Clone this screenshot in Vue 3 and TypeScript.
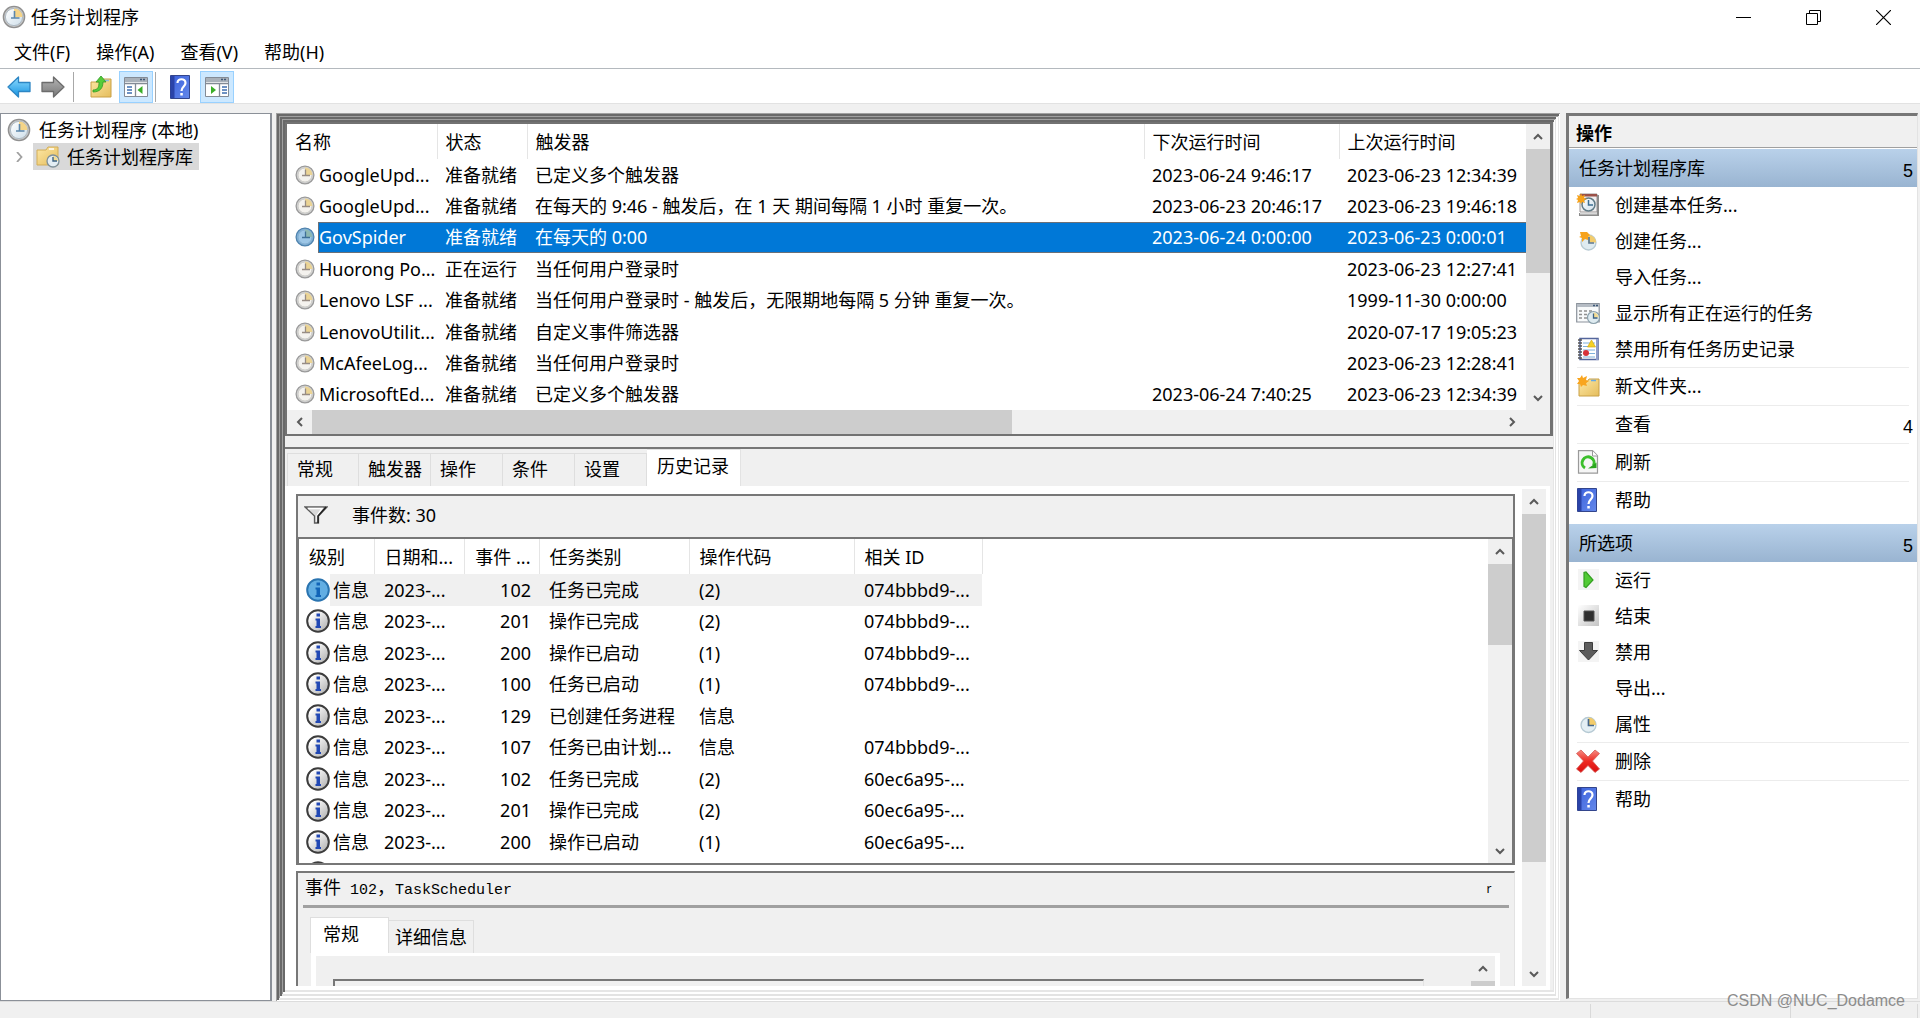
<script setup lang="ts">
import { ref } from 'vue'

interface Task { name: string; state: string; trigger: string; next: string; last: string }
interface EventRow { date: string; id: string; category: string; op: string; rel: string }
interface Action { label: string; icon?: string; divider?: boolean; mark?: string }

const menus = ['文件(F)', '操作(A)', '查看(V)', '帮助(H)']

const tasks: Task[] = [
  { name: 'GoogleUpd...', state: '准备就绪', trigger: '已定义多个触发器', next: '2023-06-24 9:46:17', last: '2023-06-23 12:34:39' },
  { name: 'GoogleUpd...', state: '准备就绪', trigger: '在每天的 9:46 - 触发后，在 1 天 期间每隔 1 小时 重复一次。', next: '2023-06-23 20:46:17', last: '2023-06-23 19:46:18' },
  { name: 'GovSpider', state: '准备就绪', trigger: '在每天的 0:00', next: '2023-06-24 0:00:00', last: '2023-06-23 0:00:01' },
  { name: 'Huorong Po...', state: '正在运行', trigger: '当任何用户登录时', next: '', last: '2023-06-23 12:27:41' },
  { name: 'Lenovo LSF ...', state: '准备就绪', trigger: '当任何用户登录时 - 触发后，无限期地每隔 5 分钟 重复一次。', next: '', last: '1999-11-30 0:00:00' },
  { name: 'LenovoUtilit...', state: '准备就绪', trigger: '自定义事件筛选器', next: '', last: '2020-07-17 19:05:23' },
  { name: 'McAfeeLog...', state: '准备就绪', trigger: '当任何用户登录时', next: '', last: '2023-06-23 12:28:41' },
  { name: 'MicrosoftEd...', state: '准备就绪', trigger: '已定义多个触发器', next: '2023-06-24 7:40:25', last: '2023-06-23 12:34:39' },
]
const selectedTask = ref(2)

const tabs = ['常规', '触发器', '操作', '条件', '设置', '历史记录']
const activeTab = ref(5)

const events: EventRow[] = [
  { date: '2023-...', id: '102', category: '任务已完成', op: '(2)', rel: '074bbbd9-...' },
  { date: '2023-...', id: '201', category: '操作已完成', op: '(2)', rel: '074bbbd9-...' },
  { date: '2023-...', id: '200', category: '操作已启动', op: '(1)', rel: '074bbbd9-...' },
  { date: '2023-...', id: '100', category: '任务已启动', op: '(1)', rel: '074bbbd9-...' },
  { date: '2023-...', id: '129', category: '已创建任务进程', op: '信息', rel: '' },
  { date: '2023-...', id: '107', category: '任务已由计划...', op: '信息', rel: '074bbbd9-...' },
  { date: '2023-...', id: '102', category: '任务已完成', op: '(2)', rel: '60ec6a95-...' },
  { date: '2023-...', id: '201', category: '操作已完成', op: '(2)', rel: '60ec6a95-...' },
  { date: '2023-...', id: '200', category: '操作已启动', op: '(1)', rel: '60ec6a95-...' },
  { date: '', id: '', category: '', op: '', rel: '' },
]
const selectedEvent = ref(0)

const groups: { title: string; items: Action[] }[] = [
  {
    title: '任务计划程序库',
    items: [
      { label: '创建基本任务...', icon: 'basic' },
      { label: '创建任务...', icon: 'newtask' },
      { label: '导入任务...' },
      { label: '显示所有正在运行的任务', icon: 'running' },
      { label: '禁用所有任务历史记录', icon: 'journal' },
      { label: '新文件夹...', icon: 'newfolder', divider: true },
      { label: '查看', divider: true, mark: '4' },
      { label: '刷新', icon: 'refresh', divider: true },
      { label: '帮助', icon: 'help', divider: true },
    ],
  },
  {
    title: '所选项',
    items: [
      { label: '运行', icon: 'run' },
      { label: '结束', icon: 'stop' },
      { label: '禁用', icon: 'disable' },
      { label: '导出...' },
      { label: '属性', icon: 'props' },
      { label: '删除', icon: 'delete', divider: true },
      { label: '帮助', icon: 'help', divider: true },
    ],
  },
]
</script>

<template>
  <div class="window">
    <svg class="defs" width="0" height="0" aria-hidden="true">
      <defs>
        <linearGradient id="gBlue" x1="0" y1="0" x2="0" y2="1"><stop offset="0" stop-color="#8fdcff" /><stop offset="1" stop-color="#1592e0" /></linearGradient>
        <linearGradient id="gGray" x1="0" y1="0" x2="0" y2="1"><stop offset="0" stop-color="#b4b4b4" /><stop offset="1" stop-color="#787878" /></linearGradient>
        <linearGradient id="gFolder" x1="0" y1="0" x2="1" y2="1"><stop offset="0" stop-color="#fde8a6" /><stop offset="1" stop-color="#e5bd5c" /></linearGradient>
        <linearGradient id="gHelp" x1="0" y1="0" x2="1" y2="1"><stop offset="0" stop-color="#3c62dc" /><stop offset="1" stop-color="#6488ea" /></linearGradient>
        <linearGradient id="gFace" x1="0" y1="0" x2="1" y2="1"><stop offset="0" stop-color="#ffffff" /><stop offset="1" stop-color="#cfdfea" /></linearGradient>
        <linearGradient id="gRed" x1="0" y1="0" x2="0" y2="1"><stop offset="0" stop-color="#f58a80" /><stop offset=".5" stop-color="#ee2a22" /><stop offset="1" stop-color="#d80f0f" /></linearGradient>
        <linearGradient id="gInfo" x1="0" y1="0" x2="1" y2="1"><stop offset="0.2" stop-color="#ffffff" /><stop offset="1" stop-color="#a9a9a9" /></linearGradient>
        <linearGradient id="gStop" x1="0" y1="0" x2="1" y2="1"><stop offset="0" stop-color="#ffffff" /><stop offset="1" stop-color="#c4c4c4" /></linearGradient>
      </defs>
      <symbol id="clock" viewBox="0 0 24 24">
        <circle cx="12" cy="12" r="10.6" fill="#c9c9c9" stroke="#909090" stroke-width="1.4" />
        <circle cx="12" cy="12" r="8.600" fill="url(#gFace)" stroke="#aebac4" />
        <path d="M12 12V3.500a8.500 8.500 0 0 1 8.500 8.500z" fill="#f5d488" />
        <path d="M12.500 6v7.500M9 13h8.500" fill="none" stroke="#5c87ab" stroke-width="1.600" />
      </symbol>
      <symbol id="taskclock" viewBox="0 0 20 20">
        <circle cx="10" cy="10" r="8.900" fill="#d4d4d4" stroke="#9a9a9a" stroke-width="1.300" />
        <circle cx="10" cy="10" r="7" fill="#f4f2ee" stroke="#c4c4c0" stroke-width=".8" />
        <path d="M10 10V2.500a7.500 7.500 0 0 1 7.500 7.500z" fill="#ebd495" />
        <path d="M10.500 4.500v6.500M7 10.500h8" fill="none" stroke="#978c84" stroke-width="1.300" />
      </symbol>
      <symbol id="taskclockSel" viewBox="0 0 20 20">
        <circle cx="10" cy="10" r="8.900" fill="#7fb0d6" stroke="#4f83ae" stroke-width="1.300" />
        <circle cx="10" cy="10" r="7" fill="#9cc6e6" stroke="#7fa9cb" stroke-width=".8" />
        <path d="M10 10V2.500a7.500 7.500 0 0 1 7.500 7.500z" fill="#8db8b2" />
        <path d="M10.500 4.500v6.500M7 10.500h8" fill="none" stroke="#3f6f96" stroke-width="1.300" />
      </symbol>
      <symbol id="back" viewBox="0 0 24 24"><path d="M1 12 11.500 2v5.500H23v9H11.500V22z" fill="url(#gBlue)" stroke="#2d86c4" stroke-width="1.300" stroke-linejoin="round" /></symbol>
      <symbol id="forward" viewBox="0 0 24 24"><path d="M23 12 12.500 2v5.500H1v9h11.500V22z" fill="url(#gGray)" stroke="#6c6c6c" stroke-width="1.300" stroke-linejoin="round" /></symbol>
      <symbol id="upfolder" viewBox="0 0 24 24">
        <path d="M2 7h9l2-3h9v18H2z" fill="url(#gFolder)" stroke="#c9a047" />
        <path d="M15 5.500h5" stroke="#8fb9dc" stroke-width="1.500" />
        <path d="M4 15c5 0 6-3 6-8H7l5-6 5 6h-3c0 6-3 10-10 10z" fill="#55cc3a" stroke="#319b25" stroke-width=".8" />
      </symbol>
      <symbol id="paneLeft" viewBox="0 0 24 20">
        <path d="M.500 .500h23v19H.500z" fill="#fff" stroke="#838b96" />
        <path d="M1 1h22v4H1z" fill="#a9b1ba" /><path d="M16 2.500h2m1 0h2" stroke="#3d5878" stroke-width="1.500" />
        <path d="M1 6.500h22M11.500 7v12" stroke="#838b96" stroke-width="1.300" />
        <path d="M3 10h5M3 13h5M3 16h5" stroke="#3f6fb0" stroke-width="1.400" /><path d="M18.500 9v8l-5-4z" fill="#3aae28" />
      </symbol>
      <symbol id="paneRight" viewBox="0 0 24 20">
        <path d="M.500 .500h23v19H.500z" fill="#fff" stroke="#838b96" />
        <path d="M1 1h22v4H1z" fill="#a9b1ba" /><path d="M16 2.500h2m1 0h2" stroke="#3d5878" stroke-width="1.500" />
        <path d="M1 6.500h22M14.500 7v12" stroke="#838b96" stroke-width="1.300" />
        <path d="M17 10h5M17 13h5M17 16h5" stroke="#3f6fb0" stroke-width="1.400" /><path d="M6 9v8l5-4z" fill="#3aae28" />
      </symbol>
      <symbol id="help" viewBox="0 0 24 24">
        <path d="M1.500 .500h19v23h-19z" fill="url(#gHelp)" stroke="#33458c" /><path d="M1.500 1h4v22h-4z" fill="#2a43a8" />
        <path d="M8.500 8c0-5 8-5 8 0 0 3.500-4 3.500-4 8" fill="none" stroke="#fff" stroke-width="2.200" /><path d="M11.300 18h2.500v2.500h-2.500z" fill="#fff" />
      </symbol>
      <symbol id="folderclock" viewBox="0 0 24 24">
        <path d="M1 5h9l2-3h10v18H1z" fill="url(#gFolder)" stroke="#d3ad57" /><path d="M13 4h5" stroke="#fff" stroke-width="1.500" />
        <circle cx="17" cy="16" r="6" fill="#e3edf3" stroke="#7f9099" stroke-width="1.300" /><path d="M17 16v-5a5 5 0 0 1 5 5z" fill="#f3dc94" /><path d="M17 12v4h4" fill="none" stroke="#3d6284" stroke-width="1.400" />
      </symbol>
      <symbol id="basic" viewBox="0 0 24 24">
        <path d="M4 1h17v18H4z" fill="#f0eeee" stroke="#9c9797" /><path d="M4 1h17v2.500H4z" fill="#9a5148" /><path d="M21 2h2v21H3v-3h18z" fill="#8b8b8b" /><path d="M4 20h17v1.500H4z" fill="#d8d8d8" />
        <circle cx="12.500" cy="11.500" r="6.500" fill="url(#gFace)" stroke="#607a86" stroke-width="1.500" /><path d="M12.500 7v5h4.500" fill="none" stroke="#3d6d90" stroke-width="1.500" />
        <path d="m5 0 1 3 3-1-1 3 3 1-3 1 1 3-3-1-1 2-1-2-3 1 1-3-2-1 2-1-1-3 3 1z" fill="#f6a21a" />
      </symbol>
      <symbol id="newtask" viewBox="0 0 24 24">
        <circle cx="12.500" cy="13.500" r="7.500" fill="#dfebf1" stroke="#b8cbd4" stroke-width="1.300" /><path d="M12.500 13.500V6a7.500 7.500 0 0 1 7.500 7.500z" fill="#f3cc6b" /><path d="M13 8v6h5" fill="none" stroke="#5d7890" stroke-width="1.700" />
        <path d="M4 3h7l3 3-2 2v3l-3-1-3 3v-4L3 8l2-1z" fill="#f7a31d" />
      </symbol>
      <symbol id="props" viewBox="0 0 24 24">
        <circle cx="12.500" cy="13" r="7.500" fill="#e4eff4" stroke="#b5c9d3" stroke-width="1.300" /><path d="M12.500 13V5.500A7.500 7.500 0 0 1 20 13z" fill="#f3cc6b" /><path d="M12.500 7v6.500H18" fill="none" stroke="#46678a" stroke-width="1.700" />
      </symbol>
      <symbol id="running" viewBox="0 0 24 24">
        <path d="M.700 2.500h22.500v18.500H.700z" fill="#f8fafb" stroke="#8b929b" stroke-width="1.200" /><path d="M1 3h22v3H1z" fill="#b5bcc4" /><path d="M17 4.500h2m1 0h2" stroke="#3d5878" stroke-width="1.300" />
        <path d="M3 10h3m2 0h3m2 0h3M3 13.500h3m2 0h3M3 17h3m2 0h3" stroke="#909090" stroke-width="1.300" />
        <circle cx="17.500" cy="16.500" r="6" fill="#deebf1" stroke="#8ba0ab" stroke-width="1.200" /><path d="M17.500 16.500v-5a5 5 0 0 1 5 5z" fill="#f3dc94" /><path d="M17.500 12.500v4.500h4" fill="none" stroke="#3d6284" stroke-width="1.300" />
      </symbol>
      <symbol id="journal" viewBox="0 0 24 24">
        <path d="M4 1.500h18v21H4z" fill="#fff" stroke="#54669c" stroke-width="1.500" /><path d="M20 2h2v21h-2z" fill="#8f9dcb" />
        <path d="M7 6h12M7 9.500h12M7 13h12M7 16.500h12M7 20h12" stroke="#7fb0dc" /><path d="M2 3h4M2 6h4M2 9h4M2 12h4M2 15h4M2 18h4M2 21h4" stroke="#555" stroke-width="1.300" />
        <path d="m15.500 3 4 7h-8z" fill="#f5d022" stroke="#d3aa18" stroke-width=".7" /><circle cx="10" cy="16" r="3" fill="#d8323a" />
      </symbol>
      <symbol id="newfolder" viewBox="0 0 24 24">
        <path d="M3 8h8l2-3h10v17H3z" fill="url(#gFolder)" stroke="#c9a047" /><path d="M15 6.500h5" stroke="#65a9e6" stroke-width="1.500" />
        <path d="m6 1 1 3 4-2-1 4 3 1-3 2 1 3-4-1-2 2-1-3-3 0 2-3-2-3 3 0z" fill="#f9a51e" />
      </symbol>
      <symbol id="refresh" viewBox="0 0 24 24">
        <path d="M2.500 .700h14l5 5v17.500h-19z" fill="#f6f6f6" stroke="#9a9a9a" stroke-width="1.200" /><path d="M16.500 1v5h5" fill="#fff" stroke="#9a9a9a" />
        <path d="M9 18a6 6 0 1 1 8.500-2.500" fill="none" stroke="#3cbf2c" stroke-width="3" /><path d="M12 18.500 20.500 18v-5.500z" fill="#2ba51f" />
      </symbol>
      <symbol id="run" viewBox="0 0 24 24"><path d="M2 1h21v21H2z" fill="#f4f4f4" /><path d="M8 4.500v14l2 1 7-7.500-7-8z" fill="#52ca36" stroke="#33a020" stroke-width="1.200" /></symbol>
      <symbol id="stop" viewBox="0 0 24 24"><path d="M2 1h21v21H2z" fill="url(#gStop)" /><path d="M8 7h10v10H8z" fill="#2f2f2f" stroke="#555" /></symbol>
      <symbol id="disable" viewBox="0 0 24 24"><path d="M2 1h21v21H2z" fill="#f4f4f4" /><path d="M8.500 2.500h8v8h5l-9 9.500-9-9.500h5z" fill="#5c5c5c" stroke="#3c3c3c" /></symbol>
      <symbol id="delete" viewBox="0 0 24 24"><path d="m5 1 7 7 7-7 4.500 3.500L16.500 12l7 8-4.500 3.500-7-7-7 7L.500 20l7-8-7-7.500z" fill="url(#gRed)" stroke="#d65a55" stroke-width=".8" stroke-linejoin="round" /></symbol>
      <symbol id="info" viewBox="0 0 24 24"><circle cx="12" cy="12" r="10.800" fill="url(#gInfo)" stroke="#3c3c3c" stroke-width="2" /><path d="M10.500 4.500H14v3h-3.500zM9.500 9.500H14V17h1v2H9.500v-2h1v-5.500h-1z" fill="#2148b4" /></symbol>
      <symbol id="infoSel" viewBox="0 0 24 24"><circle cx="12" cy="12" r="10.800" fill="#62aee3" stroke="#2a74b0" stroke-width="2" /><path d="M10.500 4.500H14v3h-3.500zM9.500 9.500H14V17h1v2H9.500v-2h1v-5.500h-1z" fill="#1264b8" /></symbol>
      <symbol id="chev" viewBox="0 0 10 10"><path d="m1 7 4-4 4 4" fill="none" stroke="#5a5a5a" stroke-width="2" /></symbol>
      <symbol id="funnel" viewBox="0 0 24 18"><path d="M1 1h22l-8.500 9v7h-4v-7z" fill="#d9d9d9" stroke="#5b5b5b" stroke-width="1.300" /><path d="M4 2.500h14l-5 7v6" fill="none" stroke="#fff" stroke-width="1.300" /><path d="m22 1-8 9v7" fill="none" stroke="#222" stroke-width="1.600" /></symbol>
    </svg>

    <header class="titlebar">
      <svg class="i24"><use href="#clock" /></svg>
      <span class="title">任务计划程序</span>
      <button class="win" aria-label="最小化"><svg width="15" height="15"><path d="M0 7.500h15" stroke="#000" /></svg></button>
      <button class="win" aria-label="还原"><svg width="15" height="15"><path d="M.500 3.500h11v11H.500zM3.500 3.500v-3h11v11h-3" fill="none" stroke="#000" /></svg></button>
      <button class="win" aria-label="关闭"><svg width="15" height="15"><path d="m0 0 15 15M15 0 0 15" stroke="#000" stroke-width="1.200" /></svg></button>
    </header>

    <nav class="menubar"><button v-for="m in menus" :key="m">{{ m }}</button></nav>

    <div class="toolbar">
      <button aria-label="后退"><svg class="i24"><use href="#back" /></svg></button>
      <button aria-label="前进"><svg class="i24"><use href="#forward" /></svg></button>
      <i class="bar first"></i>
      <button aria-label="向上"><svg class="i24"><use href="#upfolder" /></svg></button>
      <button class="on" aria-label="显示/隐藏控制台树"><svg class="pane"><use href="#paneLeft" /></svg></button>
      <i class="bar"></i>
      <button class="gap" aria-label="帮助"><svg class="i24"><use href="#help" /></svg></button>
      <button class="on" aria-label="显示/隐藏操作窗格"><svg class="pane"><use href="#paneRight" /></svg></button>
    </div>

    <main class="workspace">
      <aside class="tree">
        <div class="root-node"><svg class="i24"><use href="#clock" /></svg><span>任务计划程序 (本地)</span></div>
        <div class="child-node">
          <svg class="expander" viewBox="0 0 10 10"><path d="m3 0 4.500 5L3 10" fill="none" stroke="#a0a0a0" stroke-width="1.800" /></svg>
          <div class="node-sel"><svg class="i24"><use href="#folderclock" /></svg><span>任务计划程序库</span></div>
        </div>
      </aside>

      <section class="center">
        <div class="tasks">
          <div class="tasks-body">
            <table class="grid task-grid">
              <colgroup><col class="c-name" /><col class="c-state" /><col /><col class="c-next" /><col class="c-last" /></colgroup>
              <thead><tr><th>名称</th><th>状态</th><th>触发器</th><th>下次运行时间</th><th>上次运行时间</th></tr></thead>
              <tbody>
                <tr v-for="(t, i) in tasks" :key="i" :class="{ sel: i === selectedTask }" @click="selectedTask = i">
                  <td class="lead"><div class="cell"><svg class="i20"><use :href="i === selectedTask ? '#taskclockSel' : '#taskclock'" /></svg><span class="fill">{{ t.name }}</span></div></td>
                  <td>{{ t.state }}</td><td>{{ t.trigger }}</td><td>{{ t.next }}</td><td>{{ t.last }}</td>
                </tr>
              </tbody>
            </table>
            <div class="vscroll">
              <button aria-label="上"><svg class="i10"><use href="#chev" /></svg></button>
              <div class="thumb t-tasks"></div><div class="rest"></div>
              <button aria-label="下"><svg class="i10 down"><use href="#chev" /></svg></button>
            </div>
          </div>
          <div class="hscroll">
            <button aria-label="左"><svg class="i10 left"><use href="#chev" /></svg></button>
            <div class="hthumb"></div><div class="rest"></div>
            <button class="hr" aria-label="右"><svg class="i10 right"><use href="#chev" /></svg></button>
          </div>
        </div>

        <div class="details">
          <div class="tabs" role="tablist">
            <button v-for="(t, i) in tabs" :key="t" role="tab" :class="{ active: i === activeTab }" @click="activeTab = i">{{ t }}</button>
          </div>
          <div class="page">
            <div class="page-main">
              <div class="events">
                <div class="events-head"><svg class="funnel"><use href="#funnel" /></svg><span>事件数: 30</span></div>
                <div class="events-body">
                  <div class="events-clip">
                    <table class="grid event-grid">
                      <colgroup><col class="e-level" /><col class="e-date" /><col class="e-id" /><col class="e-cat" /><col class="e-op" /><col class="e-rel" /></colgroup>
                      <thead><tr><th>级别</th><th>日期和...</th><th class="num">事件 ...</th><th>任务类别</th><th>操作代码</th><th>相关 ID</th></tr></thead>
                      <tbody>
                        <tr v-for="(e, i) in events" :key="i" :class="{ sel: i === selectedEvent }" @click="selectedEvent = i">
                          <td class="lead"><div class="cell"><svg class="i24"><use :href="i === selectedEvent ? '#infoSel' : '#info'" /></svg><span class="fill">{{ e.date ? '信息' : '' }}</span></div></td>
                          <td>{{ e.date }}</td><td class="num">{{ e.id }}</td><td>{{ e.category }}</td><td>{{ e.op }}</td><td>{{ e.rel }}</td>
                        </tr>
                      </tbody>
                    </table>
                  </div>
                  <div class="vscroll">
                    <button aria-label="上"><svg class="i10"><use href="#chev" /></svg></button>
                    <div class="thumb t-events"></div><div class="rest"></div>
                    <button aria-label="下"><svg class="i10 down"><use href="#chev" /></svg></button>
                  </div>
                </div>
              </div>

              <div class="preview">
                <div class="preview-head"><h2>事件<span class="mono">&nbsp;102</span>，<span class="mono">TaskScheduler</span></h2><button class="close">r</button></div>
                <div class="subtabs" role="tablist"><button class="active" role="tab">常规</button><button role="tab">详细信息</button></div>
                <div class="subpage">
                  <div class="subpage-main"><div class="well"></div></div>
                  <div class="vscroll"><button aria-label="上"><svg class="i10"><use href="#chev" /></svg></button><div class="thumb rest-thumb"></div></div>
                </div>
              </div>
            </div>
            <div class="vscroll">
              <button aria-label="上"><svg class="i10"><use href="#chev" /></svg></button>
              <div class="thumb t-page"></div><div class="rest"></div>
              <button aria-label="下"><svg class="i10 down"><use href="#chev" /></svg></button>
            </div>
          </div>
        </div>
      </section>

      <aside class="actions">
        <h2 class="actions-title">操作</h2>
        <section v-for="g in groups" :key="g.title" class="group">
          <h3><span>{{ g.title }}</span><span class="mark">5</span></h3>
          <button v-for="(a, i) in g.items" :key="i" :class="{ divider: a.divider }">
            <svg class="i24"><use v-if="a.icon" :href="'#' + a.icon" /></svg>
            <span>{{ a.label }}</span><span v-if="a.mark" class="mark">{{ a.mark }}</span>
          </button>
        </section>
      </aside>
    </main>

    <footer class="status"><i></i><i></i><i class="end"></i></footer>
    <div class="credit">CSDN @NUC_Dodamce</div>
  </div>
</template>

<style>
body { margin: 0; background: #f0f0f0; }
</style>

<style scoped>
* { box-sizing: border-box; }
.window { position: relative; display: flex; flex-direction: column; min-height: 100vh; overflow: hidden; background: #f0f0f0; color: #000; font: 18px/24px "Noto Sans", "Noto Sans CJK SC", sans-serif; white-space: nowrap; }
.defs { position: absolute; }
button { display: flex; align-items: center; justify-content: center; margin: 0; padding: 0; border: 0; background: none; color: inherit; font: inherit; }
svg { display: block; flex: none; }
h2, h3 { margin: 0; font-size: 18px; line-height: 24px; font-weight: 400; }
.i10 { width: 10px; height: 10px; }
.i20 { width: 20px; height: 20px; }
.i24 { width: 24px; height: 24px; }
.down { transform: rotate(180deg); }
.left { transform: rotate(-90deg); }
.right { transform: rotate(90deg); }

.titlebar { display: flex; align-items: center; height: 34px; padding: 0 2px; background: #fff; }
.title { flex: 1; padding-left: 5px; }
.win { width: 70px; height: 34px; }
.menubar { display: flex; gap: 26px; height: 35px; padding: 2px 14px 0; background: #fff; border-bottom: 1px solid #b4b9be; }
.toolbar { display: flex; align-items: center; height: 35px; padding: 2px 2px 0; background: #fff; border-bottom: 1px solid #e2e2e2; }
.toolbar button { width: 34px; height: 32px; }
.toolbar .on { margin-left: 1px; background: #cce8ff; border: 1px solid #99d1ff; }
.toolbar .gap { margin-left: 6px; margin-right: 1px; }
.pane { width: 24px; height: 20px; }
.bar { width: 1px; height: 30px; margin: 0 2px; background: #a8a8a8; }
.bar.first { margin: 0 10px 0 3px; }

.workspace { display: flex; flex: 1; padding-top: 9px; }
.tree { width: 272px; margin-right: 4px; padding-top: 3px; background: #fff; border: 2px solid #8b9098; border-width: 1px 2px 1px 1px; }
.root-node, .child-node, .node-sel { display: flex; align-items: center; }
.root-node { height: 26px; padding-left: 6px; gap: 8px; }
.child-node { height: 27px; padding-left: 13px; }
.expander { width: 10px; height: 10px; margin-right: 9px; }
.node-sel { height: 27px; padding: 0 6px 0 3px; gap: 7px; background: #d9d9d9; }

.center { display: flex; flex: 1; flex-direction: column; min-width: 0; padding: 9px 7px 11px 9px; background: #f0f0f0;
  box-shadow: inset 1px 1px #a0a0a0, inset -1px -1px #fff, inset 3px 3px #696969, inset -2px -3px #e6e6e6, inset 4px 4px #a0a0a0, inset -4px -5px #fff, inset 6px 6px #696969, inset -5px -7px #e3e3e3, inset 7px 7px #a0a0a0, inset -6px -9px #fff, inset 9px 9px #696969, inset -7px -11px #e6e6e6; }
.tasks { border: 2px solid #727272; border-right-width: 3px; }
.tasks-body { display: flex; background: #fff; }
.grid { border-collapse: collapse; table-layout: fixed; }
.grid th, .grid td { padding: 0 0 0 9px; overflow: hidden; font-weight: 400; text-align: left; vertical-align: middle; }
.grid th { height: 35px; border-right: 1px solid #e5e5e5; }
.task-grid { flex: 1; width: 100%; height: 286px; }
.task-grid th, .task-grid td { padding-left: 8px; }
.task-grid th:last-child { border-right: 0; }
.c-name { width: 150px; }
.c-state { width: 90px; }
.c-next { width: 195px; }
.c-last { width: 187px; }
.task-grid td { height: 31px; }
.cell { display: flex; align-items: center; height: 100%; }
.fill { display: flex; flex: 1; align-items: center; align-self: stretch; }
.task-grid .cell { gap: 3px; }
.task-grid .fill { padding-left: 1px; }
.task-grid .sel { color: #fff; }
.task-grid .sel td:not(.lead), .task-grid .sel .fill { background: #0078d7; }
.task-grid .sel td:not(.lead) { box-shadow: inset 0 1px #6a7078, inset 0 -1px #6a7078; }
.task-grid .sel .fill { box-shadow: inset 1px 1px #6a7078, inset 0 -1px #6a7078; }

.vscroll { display: flex; flex: none; flex-direction: column; width: 24px; background: #f0f0f0; }
.vscroll button { flex: none; height: 25px; }
.thumb, .hthumb { background: #cdcdcd; }
.rest { flex: 1; }
.t-tasks { height: 124px; }
.t-events { height: 81px; }
.t-page { height: 348px; }
.rest-thumb { flex: 1; }
.hscroll { display: flex; height: 24px; padding-right: 24px; background: #f0f0f0; }
.hscroll button { width: 25px; }
.hscroll .hr { width: 29px; }
.hthumb { flex: 0 1 700px; }

.details { display: flex; flex: 1; flex-direction: column; margin-top: 11px; border-top: 2px solid #777; }
.tabs { display: flex; align-items: flex-end; height: 37px; padding: 0 2px; }
.tabs button { width: 72px; height: 33px; justify-content: flex-start; padding: 0 0 2px 9px; border: 1px solid #dedede; border-width: 1px 1px 0 0; }
.tabs button:first-child { border-left-width: 1px; }
.tabs .active { width: 94px; height: 37px; padding: 0 0 4px 10px; background: #fff; border-color: #e3e3e3; }
.page { display: flex; flex: 1; margin-right: 3px; padding: 3px 4px 4px 11px; background: #fff; }
.page-main { display: flex; flex: 1; flex-direction: column; min-width: 0; margin-right: 7px; padding-top: 5px; }
.events { background: #f0f0f0; border: 2px solid #777; }
.events-head { display: flex; align-items: center; height: 41px; padding: 0 6px 4px; gap: 24px; }
.funnel { width: 24px; height: 18px; }
.events-body { display: flex; height: 326px; background: #fff; border-top: 2px solid #777; border-left: 1px solid #777; border-right: 1px solid #777; }
.events-clip { flex: 1; overflow: hidden; }
.event-grid { width: 683px; height: 350px; }
.event-grid th, .event-grid td { padding-left: 10px; }
.event-grid td { height: 31px; }
.event-grid .num { padding: 0 8px 0 0; text-align: right; }
.e-level { width: 75px; }
.e-date { width: 90px; }
.e-id { width: 75px; }
.e-cat { width: 150px; }
.e-op { width: 165px; }
.e-rel { width: 128px; }
.event-grid .lead { padding-left: 7px; }
.event-grid .fill { padding-left: 3px; }
.event-grid .sel td:not(.lead), .event-grid .sel .fill { background: #f0f0f0; }

.preview { display: flex; flex: 1; flex-direction: column; margin-top: 6px; padding: 0 5px; background: #f0f0f0; border: 2px solid #777; border-width: 2px 1px 0 2px; border-right-color: #e3e3e3; }
.preview-head { display: flex; align-items: center; justify-content: space-between; height: 35px; padding: 0 16px 0 2px; border-bottom: 3px solid #a0a0a0; }
.preview-head .mono { font-family: "Liberation Mono", monospace; font-size: 15px; }
.close { width: 8px; font-size: 12px; line-height: 12px; }
.subtabs { display: flex; align-items: flex-end; height: 45px; padding-left: 7px; }
.subtabs button { width: 85px; height: 33px; border: 1px solid #dedede; border-width: 1px 1px 0 0; }
.subtabs .active { width: 79px; height: 36px; justify-content: flex-start; padding: 0 0 3px 12px; background: #fff; border-left-width: 1px; }
.subpage { display: flex; flex: 1; min-height: 32px; margin: 0 9px 0 8px; padding: 3px 5px 0 5px; background: #fff; }
.subpage-main { display: flex; flex: 1; padding: 23px 47px 0 17px; background: #f0f0f0; }
.well { flex: 1; border: 2px solid #777; border-bottom: 0; border-right: 1px solid #e3e3e3; }

.actions { width: 352px; margin: 0 2px 2px 6px; background: #fff; border: 1px solid #e3e3e3; border-top: 3px solid #777; border-left: 3px solid #777; }
.actions-title { height: 32px; padding: 5px 7px 2px; background: #f0f0f0; border-bottom: 1px solid #a0a0a0; font-weight: 700; }
.group { margin-top: 1px; padding-bottom: 5px; }
.group h3 { display: flex; align-items: center; justify-content: space-between; height: 38px; padding: 0 4px 0 10px; background: linear-gradient(#b9d1ea, #99b4d1); }
.group + .group { margin-top: 0; }
.group button { position: relative; width: 100%; height: 36px; justify-content: flex-start; gap: 15px; padding: 0 4px 0 7px; }
.group .divider { height: 38px; }
.group .divider::before { content: ""; position: absolute; top: 0; left: 8px; right: 8px; height: 1px; background: #ececec; }
.mark { margin-left: auto; padding-top: 6px; font-family: "Liberation Sans", Arial, sans-serif; }

.status { display: flex; flex: none; height: 17px; padding: 2px 2px 0; border-top: 1px solid #dcdcdc; justify-content: flex-end; }
.status i { width: 200px; border-left: 1px solid #d9d9d9; }
.status i:nth-child(2) { width: 127px; }
.status .end { width: 1px; }
.credit { position: absolute; right: 15px; bottom: 7px; color: #8c8c8c; font: 16px/20px "Liberation Sans", Arial, sans-serif; }
</style>
